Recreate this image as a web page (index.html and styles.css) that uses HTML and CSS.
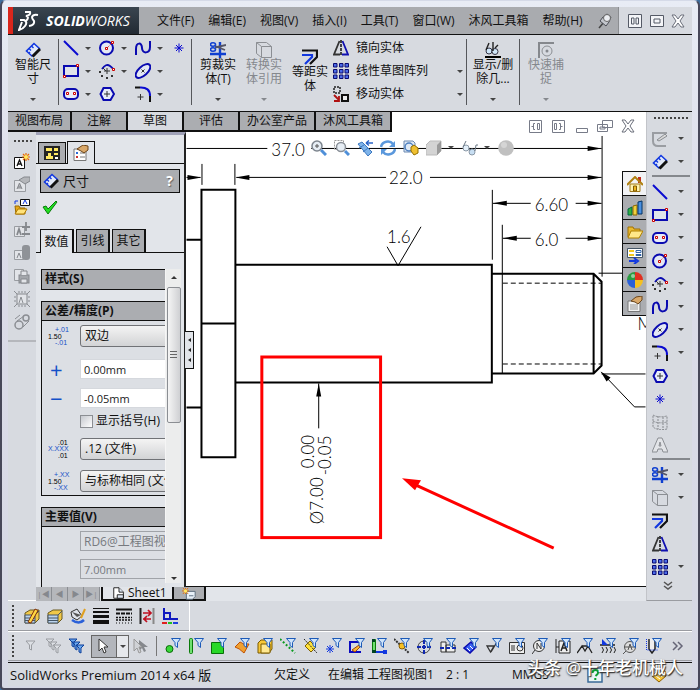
FILE: index.html
```html
<!DOCTYPE html>
<html lang="zh-CN">
<head>
  <meta charset="UTF-8" />
  <title>SolidWorks Premium 2014</title>
  <link rel="stylesheet" href="styles.css">
</head>
<body>
  <!-- 图标库 -->
  <svg class="defs" aria-hidden="true">
    <symbol id="dim" viewBox="0 0 16 16"><path d="M1.500 9L9 1.500L15 7L7.500 14.500Z" fill="#e3eaf8"/><path d="M7.500 14.500L1.500 9L9 1.500L15 7" fill="none" stroke="#1238e0" stroke-width="1.600"/><path d="M4 6.500l2 2M6.500 4l2 2M4 11l1-1" fill="none" stroke="#1238e0" stroke-width="1.400"/><path d="M15 7L7.500 14.500" stroke="#111" stroke-width="3"/></symbol>
    <symbol id="line" viewBox="0 0 16 16"><path d="M1 1L15 15" stroke="#0a0ad0" stroke-width="2"/></symbol>
    <symbol id="rect" viewBox="0 0 16 16"><path d="M1 3H15V13H1Z" fill="#e0e3ea" stroke="#0a0ab0" stroke-width="2"/><path d="M13.500 1.500h2v2h-2zM.5 12.500h2v2h-2z" fill="#fff" stroke="#c00"/></symbol>
    <symbol id="slot" viewBox="0 0 16 16"><rect x="1" y="3" width="14" height="10" rx="4" fill="#e8ecf8" stroke="#0a0ab0" stroke-width="2"/><path d="M3.500 6.500h2v2h-2zM10.500 6.500h2v2h-2z" fill="#fff" stroke="#c00"/></symbol>
    <symbol id="circle" viewBox="0 0 16 16"><circle cx="7.500" cy="8" r="6.500" fill="#e4e8f4" stroke="#0a0ab0" stroke-width="2"/><path d="M8 8L13 3" stroke="#c00" stroke-dasharray="1 1"/><path d="M6.500 7.500h2v2h-2zM12.500 1.500h2v2h-2z" fill="#fff" stroke="#c00"/></symbol>
    <symbol id="arc" viewBox="0 0 16 16"><path d="M3 6Q7 0 11 3T14 7" fill="none" stroke="#0a0ab0" stroke-width="1.800"/><path d="M8 5v6M5 8h6M4 5l3 3" stroke="#333"/><path d="M0 8h2v2H0zM2 12h2v2H2zM7 14h2v2H7zM12 12h2v2h-2z" fill="#333"/><path d="M13.500 5.500h2v2h-2z" fill="#fff" stroke="#c00"/></symbol>
    <symbol id="spline" viewBox="0 0 16 16"><path d="M1 15V9C1 2 7 2 7 8S15 14 15 7V1" fill="none" stroke="#0a0ab0" stroke-width="2"/></symbol>
    <symbol id="ellipse" viewBox="0 0 16 16"><ellipse cx="8" cy="8" rx="9" ry="4.500" transform="rotate(-42 8 8)" fill="#e4e8f4" stroke="#0a0ab0" stroke-width="2"/><path d="M6.500 6.500l3 3M9.500 6.500l-3 3" stroke="#333"/></symbol>
    <symbol id="fillet" viewBox="0 0 16 16"><path d="M0 1.500H5M15 10V16" stroke="#111" stroke-width="2"/><path d="M5 1.500Q15 1 15 10" fill="none" stroke="#0a0ad0" stroke-width="2"/><path d="M5.500 8v6M2.500 11h6" stroke="#333"/></symbol>
    <symbol id="polygon" viewBox="0 0 16 16"><path d="M4.500 2h7L15 8l-3.500 6h-7L1.500 8Z" fill="#e8ecf8" stroke="#0a0ab0" stroke-width="2"/><path d="M8 5v6M5 8h6" stroke="#333"/></symbol>
    <symbol id="star" viewBox="0 0 16 16"><path d="M8 3.500v9M3.500 8h9M5 5l6 6M11 5l-6 6" stroke="#0a0ad0"/></symbol>
    <symbol id="trim" viewBox="0 0 16 16"><path d="M10 0V16M0 12H16" stroke="#1040d0" stroke-width="2.400"/><path d="M5 5.500L16 3M5 4L15 8" stroke="#556" stroke-width="1.800"/><ellipse cx="3" cy="2.500" rx="2.500" ry="1.700" fill="none" stroke="#1040d0" stroke-width="1.600"/><ellipse cx="3" cy="7.500" rx="2.500" ry="1.700" fill="none" stroke="#1040d0" stroke-width="1.600"/></symbol>
    <symbol id="convert" viewBox="0 0 16 16"><path d="M.5 .5h10l5 4v11h-10l-5-4zM5.500 4.500h10M5.500 4.500v11M.5 .5l5 4" fill="none" stroke="#8b8e93"/></symbol>
    <symbol id="offset" viewBox="0 0 16 16"><path d="M0 1.500H15V8L8 15" fill="none" stroke="#111" stroke-width="2.200"/><path d="M0 6H10V8L3 15" fill="none" stroke="#1238e0" stroke-width="2.200"/></symbol>
    <symbol id="mirror" viewBox="0 0 16 16"><path d="M6.500 1L1 14.500H7" fill="none" stroke="#333" stroke-width="1.800"/><path d="M9.500 1L15 14.500H9" fill="none" stroke="#1010b0" stroke-width="1.800"/><path d="M8 0V16" stroke="#111" stroke-width="1.500" stroke-dasharray="3 1"/></symbol>
    <symbol id="pattern" viewBox="0 0 16 16"><path d="M.5 .5h3.500v3.500H.5zM6.500 .5h3.500v3.500H6.500zM12 .5h3.500v3.500H12zM.5 6.500h3.500v3.500H.5zM6.500 6.500h3.500v3.500H6.500zM12 6.500h3.500v3.500H12zM.5 12h3.500v3.500H.5zM6.500 12h3.500v3.500H6.500zM12 12h3.500v3.500H12z" fill="#4a6ae8" stroke="#0a0a70"/></symbol>
    <symbol id="move" viewBox="0 0 16 16"><path d="M1 1h6v6H1z" fill="none" stroke="#222" stroke-width="1.500" stroke-dasharray="2 1"/><path d="M9 9h6v6H9z" fill="#eee" stroke="#111" stroke-width="2"/><path d="M1 9l5 5M6 10v5H1" stroke="#b01010" stroke-width="1.800" fill="none"/></symbol>
    <symbol id="show" viewBox="0 0 16 16"><circle cx="4" cy="9" r="3" fill="#cfe6f8" stroke="#334"/><circle cx="10" cy="9.500" r="3" fill="#cfe6f8" stroke="#334"/><path d="M1 8L4 1M8 9V0M10 6l3-3" stroke="#222" fill="none" stroke-width="1.400"/><path d="M0 15H16" stroke="#000" stroke-width="2"/></symbol>
    <symbol id="snap" viewBox="0 0 16 16"><path d="M1 16V1H16" fill="none" stroke="#85888d" stroke-width="2"/><circle cx="9" cy="9" r="5" fill="none" stroke="#8b8e93"/><circle cx="9" cy="9" r="1.500" fill="#85888d"/></symbol>
    <symbol id="pin" viewBox="0 0 16 16"><path d="M2 15L7 9" stroke="#444" stroke-width="1.500"/><path d="M3 8L9 13L12 9L14 4L10 1L6 4Z" fill="#c3c6cc" stroke="#4a4d55"/><circle cx="10" cy="5" r="3.500" fill="#eceef2" stroke="#666"/></symbol>
    <symbol id="win-tile" viewBox="0 0 16 16"><path d="M1.500 1.500h13v13h-13zM4.500 5h2.500v6H4.500zM9 5h2.500v6H9z" fill="#f4f5f8" stroke="#555a66"/></symbol>
    <symbol id="win-max" viewBox="0 0 16 16"><path d="M1.500 2.500h13v11h-13zM5 6h6v4H5z" fill="#f4f5f8" stroke="#555a66"/></symbol>
    <symbol id="win-close" viewBox="0 0 16 16"><path d="M2 2h3l3 4 3-4h3l-4 6 4 6h-3l-3-4-3 4H2l4-6z" fill="#fff" stroke="#6a6e7a"/></symbol>
    <symbol id="win-prev" viewBox="0 0 16 16"><path d="M1.500 2.500h12v12h-12z" fill="#fff" stroke="#777b88"/><path d="M9.500 5.500h2v6h-2zM7 5.500H5.500v6H7M6 8.500H3.500" fill="none" stroke="#777b88"/></symbol>
    <symbol id="win-next" viewBox="0 0 16 16"><path d="M1.500 2.500h12v12h-12z" fill="#fff" stroke="#777b88"/><path d="M3.500 5.500h2v6h-2zM8 5.500h1.500v6H8M9 8.500h2.500" fill="none" stroke="#777b88"/></symbol>
    <symbol id="win-min" viewBox="0 0 16 16"><path d="M2.500 10.500h11v4h-11z" fill="#fff" stroke="#777b88"/></symbol>
    <symbol id="win-restore" viewBox="0 0 16 16"><path d="M5.500 2.500h10v7h-10zM.5 6.500h10v7H.5zM3 9h5v2H3z" fill="#fff" stroke="#777b88"/></symbol>

    <!-- 注解工具栏 -->
    <symbol id="note-new" viewBox="0 0 16 16"><path d="M.5 4.500h10v11H.5z" fill="#fff" stroke="#111"/><path d="M3 13l2.500-6L8 13M4 11h3" stroke="#111" fill="none" stroke-width="1.300"/><path d="M12 0v8M8 4h8M9 1l6 6M15 1L9 7" stroke="#e86a00" stroke-width="1.200"/><circle cx="12" cy="4" r="2" fill="#ffe860"/></symbol>
    <symbol id="note-gray" viewBox="0 0 16 16"><path d="M.5 4.500h11v11H.5z" fill="#e2e4e8" stroke="#999ca1"/><path d="M3 13l2.500-6L8 13M4 11h3M5 4l5-3h6v4l-5 3z" stroke="#85888d" fill="#b4b6ba"/></symbol>
    <symbol id="note-open" viewBox="0 0 16 16"><path d="M6.500 .5h9v6h-9z" fill="#fff" stroke="#111"/><path d="M9 5l2-4 2 4M1 5V2h3" stroke="#1238e0" fill="none"/><path d="M1 7h4l1 2h5v6H2z" fill="#e8a818" stroke="#9a6a00"/><path d="M4 10h9l-3 5H1z" fill="#ffe27a" stroke="#b07a00"/></symbol>
    <symbol id="note-plus" viewBox="0 0 16 16"><path d="M.5 4.500h10v10H.5z" fill="#e2e4e8" stroke="#999ca1"/><path d="M3 13l2-6 2 6M12 0v9M8 5h8M8 12h8" stroke="#85888d" stroke-width="1.800" fill="none"/></symbol>
    <symbol id="note-stack" viewBox="0 0 16 16"><path d="M.5 5.500h9v9h-9z" fill="#e2e4e8" stroke="#999ca1"/><path d="M3 13l2-5 2 5" stroke="#85888d" fill="none"/><rect x="8" y="0" width="8" height="15" rx="3" fill="#8f9297"/></symbol>
    <symbol id="note-lock" viewBox="0 0 16 16"><path d="M.5 1.500h9v11h-9z" fill="#e2e4e8" stroke="#999ca1"/><rect x="5" y="7" width="10" height="8" fill="#a3a6ab" stroke="#85888d"/><path d="M7 7V3h6v4M7 11h6v4H7z" fill="#e2e4e8" stroke="#85888d"/></symbol>
    <symbol id="note-frame" viewBox="0 0 16 16"><path d="M3 3h10v10H3z" fill="#e2e4e8" stroke="#85888d"/><path d="M5 12l2-6 2 6M0 0l3 3M16 0l-3 3M0 16l3-3M16 16l-3-3M5 0v2M8 0v2M11 0v2M5 14v2M8 14v2M11 14v2M0 6h2M0 10h2M14 6h2M14 10h2" stroke="#8b8e93" fill="none"/></symbol>
    <symbol id="belt" viewBox="0 0 16 16"><circle cx="5" cy="11" r="4" fill="none" stroke="#8b8e93" stroke-width="1.500"/><circle cx="12" cy="4" r="3" fill="none" stroke="#8b8e93" stroke-width="1.500"/><path d="M1 5L6 1M9 13l6-6M3 7l7-5" stroke="#8b8e93"/></symbol>

    <!-- 属性面板 -->
    <symbol id="tree" viewBox="0 0 16 16"><path d="M0 1h16v14H0z" fill="#222"/><path d="M2 3h6v3H2zM10 3h4v3h-4zM4 8h3v3h2v3H2v-3h2zM10 8h4v2h-4z" fill="#ffe860"/><path d="M11 12h3v2h-3z" fill="#fff"/></symbol>
    <symbol id="props" viewBox="0 0 16 16"><path d="M1 4h12v11.500H1z" fill="#fff" stroke="#777"/><path d="M3 7h2v2H3z" fill="#2a6ad8"/><path d="M3 11h2v2H3z" fill="#c33"/><path d="M7 8h5M7 12h5" stroke="#777"/><path d="M4 4L10 0l5 1v4l-4 3-3-2z" fill="#d9a86a" stroke="#6b451a"/></symbol>
    <symbol id="check" viewBox="0 0 16 16"><path d="M1 8l3-1 2 3 8-8 1 1-9 12z" fill="#20e020" stroke="#0a7a0a"/></symbol>

    <!-- 视图工具 -->
    <symbol id="zoom-fit" viewBox="0 0 16 16"><path d="M10 10l5 5" stroke="#4f8fd8" stroke-width="3"/><circle cx="6" cy="6" r="5" fill="#e6edf4" stroke="#7d858e" stroke-width="1.500"/><path d="M4 6h4M6 4v4" stroke="#555"/></symbol>
    <symbol id="zoom-area" viewBox="0 0 16 16"><path d="M.5 .5h9v9h-9z" fill="none" stroke="#999" stroke-dasharray="2 1"/><path d="M11 11l4 4" stroke="#4f8fd8" stroke-width="3"/><circle cx="7" cy="7" r="4.500" fill="#e6edf4" stroke="#8a9098" stroke-width="1.500"/></symbol>
    <symbol id="prev-view" viewBox="0 0 16 16"><path d="M1 4l4-2 10 10-4 4z" fill="#7fb4ea" stroke="#3c78c0"/><path d="M2 8l5-3M6 12l5-4" stroke="#3c78c0"/><path d="M9 3h7M9 3l3-2.500M9 3l3 2.500" stroke="#2d66c8" stroke-width="1.500"/></symbol>
    <symbol id="rotate" viewBox="0 0 16 16"><path d="M1 7C2 1 10 0 13 4M15 9C14 15 6 16 3 12" fill="none" stroke="#5b98dc" stroke-width="2.500"/><path d="M15 1v6H9zM1 15V9h6z" fill="#5b98dc"/></symbol>
    <symbol id="view3d" viewBox="0 0 16 16"><path d="M1 1h9l2 2v9H1z" fill="#dfe9f5" stroke="#6a88b0"/><circle cx="6" cy="7" r="4" fill="none" stroke="#4f80c0" stroke-width="1.500"/><path d="M8 11V7l3-2 4 3v5l-4 2z" fill="#f0c030" stroke="#957000"/></symbol>
    <symbol id="cube" viewBox="0 0 16 16"><path d="M0 5l4-4h11v10l-4 4H0z" fill="#d4d4d4" stroke="#bbb"/><path d="M11 5l4-4v10l-4 4z" fill="#9b9b9b"/></symbol>
    <symbol id="glasses" viewBox="0 0 16 16"><circle cx="4" cy="8" r="3" fill="#e3eff9" stroke="#8a98a6"/><circle cx="10" cy="12" r="3" fill="#c7def2" stroke="#8a98a6"/><path d="M1 7l3-6M7 9l2 1M13 11l1-6h2" stroke="#6a7886" fill="none"/></symbol>
    <symbol id="ball" viewBox="0 0 16 16"><circle cx="8" cy="8" r="7.800" fill="#c0c0c0"/><circle cx="6" cy="5" r="3" fill="#d5d5d5"/></symbol>

    <!-- 任务窗格 -->
    <symbol id="home" viewBox="0 0 16 16"><path d="M11 1h3v6h-3z" fill="#c03020"/><path d="M3 8h10v7.500H3z" fill="#fff3b0" stroke="#a07818"/><path d="M0 9L8 1l8 8" fill="none" stroke="#b08010" stroke-width="2"/><path d="M6.500 10h3v5h-3z" fill="#f0b820" stroke="#805a00"/></symbol>
    <symbol id="library" viewBox="0 0 16 16"><path d="M1 9l4-2v8H1z" fill="#30b040" stroke="#064"/><path d="M6 6l4-1v10H6z" fill="#f0d040" stroke="#860"/><path d="M11 2l4-1v13h-4z" fill="#4a90e0" stroke="#036"/></symbol>
    <symbol id="folder" viewBox="0 0 16 16"><path d="M1 13V3h5l1 2h6v3" fill="#e8b830" stroke="#a07000"/><path d="M4 7h12l-4 7H1z" fill="#ffe88a" stroke="#b08000"/></symbol>
    <symbol id="palette" viewBox="0 0 16 16"><path d="M.5 .5h15v9H.5z" fill="#fff" stroke="#456"/><path d="M2 2h5v2H2zM2 6h5v2H2z" fill="#f0c820"/><path d="M9 2.500h5v2H9zM9 6.500h5v1H9z" fill="#fff" stroke="#36a"/><path d="M2 13h7M7 10l4 3-4 3" stroke="#1238e0" stroke-width="2" fill="none"/></symbol>
    <symbol id="appearance" viewBox="0 0 16 16"><path d="M8 8V0a8 8 0 0 0-8 8z" fill="#2a9a40"/><path d="M8 8V0a8 8 0 0 1 8 8z" fill="#e03020"/><path d="M8 8H0a8 8 0 0 0 8 8z" fill="#2a60d8"/><path d="M8 8h8a8 8 0 0 1-8 8z" fill="#f5c020"/><circle cx="6" cy="4" r="2" fill="#fff" opacity=".5"/></symbol>
    <symbol id="custom" viewBox="0 0 16 16"><path d="M1 5h12v10.500H1z" fill="#f2f2f2" stroke="#777"/><path d="M3 9h8M3 11h8M3 13h8" stroke="#999"/><path d="M4 5L9 1l6-1v4l-4 4-3-2z" fill="#d9a86a" stroke="#6b451a"/></symbol>

    <!-- 图层与选择过滤 -->
    <symbol id="layer" viewBox="0 0 16 16"><path d="M1 5l5-3h9v9l-4 4H1z" fill="#f0c848" stroke="#6b5a20"/><path d="M1 7h10v8H1z" fill="#bcd4ec" stroke="#456"/><path d="M1 10h10M1 12.500h10M11 7l4-4" stroke="#456"/></symbol>
    <symbol id="layer-edit" viewBox="0 0 16 16"><use href="#layer"/><path d="M4 14L11 1l3 1.500L7 15z" fill="#ffd840" stroke="#803010"/></symbol>
    <symbol id="bucket" viewBox="0 0 16 16"><path d="M2 12q7 5 12 0" fill="none" stroke="#2a60d8" stroke-width="2.500"/><path d="M1 4l6-3 5 7-5 4-5-3z" fill="#dfe3ea" stroke="#333"/><path d="M2 4l5 5 4-2z" fill="#555"/><path d="M15 1l-4 9" stroke="#e0a020" stroke-width="2"/></symbol>
    <symbol id="thick" viewBox="0 0 16 16"><path d="M0 .5h16" stroke="#111"/><path d="M0 4h16" stroke="#111" stroke-width="2"/><path d="M0 8.500h16" stroke="#111" stroke-width="3"/><path d="M0 14h16" stroke="#111" stroke-width="4"/></symbol>
    <symbol id="style" viewBox="0 0 16 16"><path d="M0 1.500h16" stroke="#111" stroke-width="2"/><path d="M0 5.500h16" stroke="#111" stroke-width="2" stroke-dasharray="4 1"/><path d="M0 9.500h16M0 12h16" stroke="#111" stroke-width="1.500" stroke-dasharray="2 1"/><path d="M0 15h16" stroke="#111" stroke-dasharray="1 2"/></symbol>
    <symbol id="swap" viewBox="0 0 16 16"><path d="M1.500 0v16" stroke="#222" stroke-width="2"/><path d="M14.500 0v16" stroke="#888" stroke-width="2"/><path d="M4 5h8M9 2l3 3-3 3M12 11H4M8 8l-3 3 3 3" stroke="#c01020" stroke-width="1.700" fill="none"/></symbol>
    <symbol id="color" viewBox="0 0 16 16"><path d="M2 0v11h14M2 5h6v6" fill="none" stroke="#1018c0" stroke-width="2"/><path d="M0 15h5" stroke="#e02020" stroke-width="2"/><path d="M6 15h4" stroke="#20c020" stroke-width="2"/><path d="M11 15h5" stroke="#2040e0" stroke-width="2"/></symbol>
    <symbol id="funnel" viewBox="0 0 16 16"><path d="M6.500 .5h9l-3 4v5l-2.500-2V4.500z" fill="#cfe4fa" stroke="#1c5ab8"/></symbol>
    <symbol id="f-gray" viewBox="0 0 16 16"><path d="M4 3h9L9.500 7v5l-2-1V7z" fill="#dcdfe4" stroke="#9a9da2"/></symbol>
    <symbol id="f-multi" viewBox="0 0 16 16"><path d="M1 1h8L6 4v5L4 8V4zM4 4h8L9 7v5l-2-1V7zM8 7h8l-3 3v5l-2-1v-4z" fill="#dcdfe4" stroke="#9a9da2"/></symbol>
    <symbol id="f-blue" viewBox="0 0 16 16"><path d="M1 1h8L6 4v5L4 8V4zM4 4h8L9 7v5l-2-1V7zM8 7h8l-3 3v5l-2-1v-4z" fill="#6aa8f0" stroke="#0c3f9a"/></symbol>
    <symbol id="cursor" viewBox="0 0 16 16"><path d="M4 1v12l3-3 2 5 2-1-2-5h4z" fill="#fff" stroke="#333"/></symbol>
    <symbol id="cursor-gray" viewBox="0 0 16 16"><path d="M6 2v11l3-3 2 4 2-1-2-4h4z" fill="#85888d"/><path d="M1 1v12l3-3 2 5 2-1-2-5h3z" fill="#d0d2d6" stroke="#999"/></symbol>
    <symbol id="b-vertex" viewBox="0 0 16 16"><circle cx="4.500" cy="11" r="3.500" fill="#38d838" stroke="#0a6a0a"/></symbol>
    <symbol id="b-edge" viewBox="0 0 16 16"><rect x="1.500" y=".5" width="3" height="15" rx="1" fill="#70e070" stroke="#0a7a0a"/></symbol>
    <symbol id="b-face" viewBox="0 0 16 16"><path d="M.5 4.500h12v11H.5z" fill="#28d828" stroke="#087008"/></symbol>
    <symbol id="b-surf" viewBox="0 0 16 16"><path d="M1 9l5-5q3 3 9 2l-5 9Q5 10 1 9z" fill="#f0a030" stroke="#c05000"/></symbol>
    <symbol id="b-body" viewBox="0 0 16 16"><path d="M1 5l3-3h11v9l-3 4H1z" fill="#f8c838" stroke="#7a5a00"/><path d="M4 6h9v9H4z" fill="#ffe890" stroke="#7a5a00"/></symbol>
    <symbol id="b-axis" viewBox="0 0 16 16"><path d="M0 1l15 14" stroke="#0a9a20" stroke-width="2" stroke-dasharray="2 2"/></symbol>
    <symbol id="b-plane" viewBox="0 0 16 16"><path d="M2 8l5-5 6 6-5 5z" fill="#ffe23a" stroke="#806000"/><path d="M1 1l13 14" stroke="#222" stroke-dasharray="2 1"/></symbol>
    <symbol id="b-point" viewBox="0 0 16 16"><path d="M4 7v8M0 11h8M1 8l6 6M7 8l-6 6" stroke="#1238e0"/></symbol>
    <symbol id="b-sketch" viewBox="0 0 16 16"><path d="M10 4H1v10h11" stroke="#0a0ac0" stroke-width="2" fill="none"/><path d="M3 12l7-5 1 2-5 5z" fill="#f8b830" stroke="#a04010"/></symbol>
    <symbol id="b-seg" viewBox="0 0 16 16"><path d="M1.500 1.500h3v12h-3z" fill="#70e070" stroke="#0a7a0a"/><path d="M3 14h12" stroke="#1238e0" stroke-width="2"/><path d="M1 1h3v3H1zM1 12h4v3H1z" fill="#042"/><path d="M12 12h4v4h-4z" fill="#1238e0"/></symbol>
    <symbol id="b-mid" viewBox="0 0 16 16"><path d="M0 1l15 14" stroke="#333" stroke-width="2" stroke-dasharray="2 1"/><circle cx="8" cy="8" r="3" fill="#f8c020" stroke="#8a6000"/></symbol>
    <symbol id="b-center" viewBox="0 0 16 16"><circle cx="7" cy="9" r="6" fill="none" stroke="#444"/><path d="M7 2v14M0 9h14" stroke="#1028b0" stroke-width="2" stroke-dasharray="4 1"/></symbol>
    <symbol id="b-cline" viewBox="0 0 16 16"><path d="M1 4h5v10H1zM6 7h9v7H6z" fill="#eee" stroke="#333"/><path d="M0 10h16" stroke="#1028b0" stroke-width="2" stroke-dasharray="4 2"/></symbol>
    <symbol id="b-dim" viewBox="0 0 16 16"><path d="M1 10l7-6 5 5-6 6z" fill="#3a60f0" stroke="#0a0ab0" stroke-width="1.500"/><path d="M4 10l3 3M7 8l3 3" stroke="#fff"/></symbol>
    <symbol id="b-rough" viewBox="0 0 16 16"><path d="M1 8h7l-3.500 6zM5 14l6-10" fill="none" stroke="#333" stroke-width="1.300"/></symbol>
    <symbol id="b-gtol" viewBox="0 0 16 16"><path d="M.5 4.500h15v11H.5z" fill="#eee" stroke="#333"/><path d="M2 8h4M2 10h4M2 12h4" stroke="#333"/><circle cx="11" cy="10" r="3" fill="none" stroke="#333"/></symbol>
    <symbol id="b-note" viewBox="0 0 16 16"><circle cx="7" cy="8" r="5.500" fill="#eee" stroke="#333"/><path d="M5 11V5l4 6V5M0 16l3-4" stroke="#333" fill="none"/></symbol>
    <symbol id="b-datum" viewBox="0 0 16 16"><path d="M1 1v14M1 9h3M4 3h11v12H4z" fill="#eee" stroke="#222"/><path d="M6 13l3-8 3 8M7 10h4" fill="none" stroke="#222" stroke-width="1.500"/></symbol>
    <symbol id="b-weld" viewBox="0 0 16 16"><path d="M0 15l5-7 3 5 3-5 4 7M5 8h8" fill="none" stroke="#222" stroke-width="1.300"/></symbol>
    <symbol id="b-hatch" viewBox="0 0 16 16"><path d="M0 7h15" stroke="#222" stroke-width="1.500"/><path d="M2 1v6h6z" fill="#1238e0"/><path d="M2 9q3 3 0 6M6 9q3 3 0 6M10 9q3 3 0 6M14 9q3 3 0 6" fill="none" stroke="#222"/></symbol>
    <symbol id="b-target" viewBox="0 0 16 16"><circle cx="7" cy="9" r="5.500" fill="#ddd" stroke="#555"/><path d="M5 12l2-6 2 6M1 9h12M0 16l3-3" fill="none" stroke="#555"/></symbol>
    <symbol id="b-thread" viewBox="0 0 16 16"><path d="M3 1v10l3 4 3-4V1" fill="#eee" stroke="#222" stroke-width="1.500"/><path d="M.5 1v11H12" fill="none" stroke="#1238e0" stroke-dasharray="1 1"/></symbol>
    <symbol id="sketch" viewBox="0 0 16 16"><path d="M15 2H1v8q0 5 5 5h8" fill="none" stroke="#9a9da2" stroke-width="2"/><path d="M5 9l8-6 2 2-8 5z" fill="#d8d8d8" stroke="#8a8d92"/></symbol>
    <symbol id="grid3d" viewBox="0 0 16 16"><path d="M1 1q5 3 14 1v13q-9 2-14-2zM1 7q5 3 14 1M6 2v13M11 3v12" fill="none" stroke="#85888d" stroke-dasharray="2 1"/></symbol>
    <symbol id="text-tool" viewBox="0 0 16 16"><path d="M0 15l6-14h4l6 14h-5l-1-3H6l-1 3zM7 9h2L8 5z" fill="#e2e4e8" stroke="#8b8e93"/></symbol>
    <symbol id="more-down" viewBox="0 0 16 16"><path d="M4 4l4 3 4-3M4 8l4 3 4-3" fill="none" stroke="#555" stroke-width="1.500"/></symbol>
    <symbol id="more-right" viewBox="0 0 16 16"><path d="M4 4l4 4-4 4M9 4l4 4-4 4" fill="none" stroke="#667" stroke-width="1.500"/></symbol>
    <symbol id="help" viewBox="0 0 16 16"><path d="M1 1h14v14H1z" fill="#e8f4f4" stroke="#3a6a98" stroke-width="1.500"/><path d="M5.500 6q0-3 3-3t2.500 3q0 1-2.500 3M8.300 11v2" fill="none" stroke="#08a030" stroke-width="2"/></symbol>
    <symbol id="tag" viewBox="0 0 16 16"><path d="M1 9l7-7 6 2 1 5-7 6z" fill="#f8c838" stroke="#906000"/><path d="M5 9l4 3M7 6l4 4" stroke="#fff"/></symbol>
    <symbol id="sheet" viewBox="0 0 16 16"><path d="M2 2h6l5 5v7H2z" fill="#fff" stroke="#111"/><path d="M8 2v5h5M6 10h7v4H6z" fill="#dfe8f5" stroke="#111"/></symbol>
    <symbol id="sheet-add" viewBox="0 0 16 16"><path d="M5 5h10v6l-3 3H5z" fill="#e8f0f8" stroke="#567"/><path d="M8 10h5" stroke="#567"/><path d="M4 1v7M0 4.500h8M1 1l6 7M7 1L1 8" stroke="#e86a00"/><circle cx="4" cy="4.500" r="2" fill="#ffe860"/></symbol>
  </svg>

  <div class="window">
    <!-- 菜单栏 -->
    <header class="menubar">
      <div class="logo">
        <svg class="logo-mark" viewBox="0 0 22 20"><path d="M7 1h5q1 3-4 4 4 1 0 5M2 9h4q4 2 1 6-2 3-6 4l3-8M20 4q-5-1-6 2 0 2 2 4 1 4-5 5" fill="none" stroke="#fff" stroke-width="2"/></svg>
        <span><b>SOLID</b>WORKS</span>
      </div>
      <nav class="menus">
        <a href="#">文件(F)</a>
        <a href="#">编辑(E)</a>
        <a href="#">视图(V)</a>
        <a href="#">插入(I)</a>
        <a href="#">工具(T)</a>
        <a href="#">窗口(W)</a>
        <a href="#">沐风工具箱</a>
        <a href="#">帮助(H)</a>
        <button class="pin" aria-label="固定"><svg><use href="#pin"/></svg></button>
      </nav>
      <div class="window-buttons">
        <button class="tool" aria-label="平铺"><svg><use href="#win-tile"/></svg></button>
        <button class="tool" aria-label="最大化"><svg><use href="#win-max"/></svg></button>
        <button class="tool" aria-label="关闭"><svg><use href="#win-close"/></svg></button>
      </div>
    </header>

    <!-- 命令管理器 -->
    <section class="ribbon">
      <div class="ribbon-group">
        <button class="big"><svg><use href="#dim"/></svg><span>智能尺<br>寸</span><i class="caret"></i></button>
      </div>
      <div class="ribbon-group sketch-grid">
        <button class="tool drop" aria-label="直线"><svg><use href="#line"/></svg><i class="caret"></i></button>
        <button class="tool drop" aria-label="圆"><svg><use href="#circle"/></svg><i class="caret"></i></button>
        <button class="tool drop" aria-label="样条曲线"><svg><use href="#spline"/></svg><i class="caret"></i></button>
        <button class="tool" aria-label="点"><svg><use href="#star"/></svg></button>
        <button class="tool drop" aria-label="矩形"><svg><use href="#rect"/></svg><i class="caret"></i></button>
        <button class="tool drop" aria-label="圆弧"><svg><use href="#arc"/></svg><i class="caret"></i></button>
        <button class="tool drop" aria-label="椭圆"><svg><use href="#ellipse"/></svg><i class="caret"></i></button>
        <span></span>
        <button class="tool drop" aria-label="槽口"><svg><use href="#slot"/></svg><i class="caret"></i></button>
        <button class="tool" aria-label="多边形"><svg><use href="#polygon"/></svg></button>
        <button class="tool drop" aria-label="圆角"><svg><use href="#fillet"/></svg><i class="caret"></i></button>
      </div>
      <div class="ribbon-group">
        <button class="big"><svg><use href="#trim"/></svg><span>剪裁实<br>体(T)</span><i class="caret"></i></button>
        <button class="big" disabled><svg><use href="#convert"/></svg><span>转换实<br>体引用</span><i class="caret"></i></button>
        <button class="big low"><svg><use href="#offset"/></svg><span>等距实<br>体</span></button>
        <div class="command-list">
          <button><svg><use href="#mirror"/></svg>镜向实体</button>
          <button><svg><use href="#pattern"/></svg>线性草图阵列<i class="caret"></i></button>
          <button><svg><use href="#move"/></svg>移动实体<i class="caret"></i></button>
        </div>
      </div>
      <div class="ribbon-group">
        <button class="big"><svg><use href="#show"/></svg><span>显示/删<br>除几...</span><i class="caret"></i></button>
      </div>
      <div class="ribbon-group">
        <button class="big" disabled><svg><use href="#snap"/></svg><span>快速捕<br>捉</span><i class="caret"></i></button>
      </div>
    </section>

    <div class="workspace">
      <div class="document">
        <div class="command-tabs">
          <button>视图布局</button>
          <button>注解</button>
          <button class="active">草图</button>
          <button>评估</button>
          <button>办公室产品</button>
          <button>沐风工具箱</button>
          <div class="doc-buttons">
            <button class="tool" aria-label="上一窗口"><svg><use href="#win-prev"/></svg></button>
            <button class="tool" aria-label="下一窗口"><svg><use href="#win-next"/></svg></button>
            <button class="tool" aria-label="最小化"><svg><use href="#win-min"/></svg></button>
            <button class="tool" aria-label="还原"><svg><use href="#win-restore"/></svg></button>
            <button class="tool" aria-label="关闭文档"><svg><use href="#win-close"/></svg></button>
          </div>
        </div>

        <div class="doc-body">
          <!-- 注解工具栏 -->
          <aside class="left-tools">
            <div class="left-tools-list">
              <i class="grip"></i>
              <button class="tool" aria-label="新注释"><svg><use href="#note-new"/></svg></button>
              <button class="tool" aria-label="编辑注释"><svg><use href="#note-gray"/></svg></button>
              <button class="tool" aria-label="打开样式"><svg><use href="#note-open"/></svg></button>
              <button class="tool" aria-label="添加样式"><svg><use href="#note-plus"/></svg></button>
              <button class="tool" aria-label="堆叠"><svg><use href="#note-stack"/></svg></button>
              <button class="tool" aria-label="锁定"><svg><use href="#note-lock"/></svg></button>
              <button class="tool" aria-label="边框"><svg><use href="#note-frame"/></svg></button>
              <button class="tool" aria-label="皮带"><svg><use href="#belt"/></svg></button>
            </div>
          </aside>

          <div class="doc-main">
            <div class="doc-view">
              <!-- 属性面板 -->
              <section class="panel">
                <div class="panel-tabs">
                  <button aria-label="设计树"><svg><use href="#tree"/></svg></button>
                  <button class="active" aria-label="属性"><svg><use href="#props"/></svg></button>
                </div>
                <div class="panel-title">
                  <svg><use href="#dim"/></svg>
                  <h1>尺寸</h1>
                  <button aria-label="帮助">?</button>
                </div>
                <button class="ok" aria-label="确定"><svg><use href="#check"/></svg></button>
                <div class="value-tabs">
                  <button class="active">数值</button>
                  <button>引线</button>
                  <button>其它</button>
                </div>
                <div class="panel-scroll">
                  <div class="panel-content">
                    <fieldset class="style-box">
                      <h2>样式(S)</h2>
                    </fieldset>
                    <fieldset class="tolerance-box">
                      <h2>公差/精度(P)</h2>
                      <div class="row first">
                        <svg class="tol" viewBox="0 0 20 20"><text x="0" y="13">1.50</text><text class="blue" x="7" y="6">+.01</text><text class="blue" x="7" y="19">-.01</text></svg>
                        <select aria-label="公差类型"><option>双边</option></select>
                      </div>
                      <label class="row"><span class="sign">+</span><input type="text" value="0.00mm"></label>
                      <label class="row"><span class="sign">−</span><input type="text" value="-0.05mm"></label>
                      <label class="check-row"><input type="checkbox">显示括号(H)</label>
                      <div class="row">
                        <svg class="tol" viewBox="0 0 20 20"><text x="10" y="6">.01</text><text class="blue" x="0" y="12">X.XXX</text><text x="10" y="19">.01</text></svg>
                        <select aria-label="单位精度"><option>.12 (文件)</option></select>
                      </div>
                      <div class="row last">
                        <svg class="tol" viewBox="0 0 20 20"><text x="0" y="13">1.50</text><text class="blue" x="6" y="6">+.XX</text><text class="blue" x="6" y="19">-.XX</text></svg>
                        <select aria-label="公差精度"><option>与标称相同 (文件)</option></select>
                      </div>
                    </fieldset>
                    <fieldset class="value-box">
                      <h2>主要值(V)</h2>
                      <div class="row"><input class="name" type="text" value="RD6@工程图视图1" aria-label="名称" disabled></div>
                      <div class="row"><input type="text" value="7.00mm" aria-label="尺寸值" disabled></div>
                    </fieldset>
                  </div>
                  <div class="scrollbar"><i class="up"></i><i class="thumb"></i><i class="down"></i></div>
                </div>
              </section>

              <!-- 工程图 -->
              <main class="drawing">
                <svg class="sheet" viewBox="186 132 460 455">
                  <g class="thin">
                    <path d="M186 148.500H267M311 148.500H602M236 177.500H386M430 177.500H602M186 177.500H200"/>
                    <path d="M201.500 164V185M234.500 164V185M492.500 190V260M502.500 225V374M602.500 136V277"/>
                    <path d="M493 203.500H531M576 203.500H602M503 238.500H531M566 238.500H602"/>
                    <path d="M599 273.500H646M602 374.500H646M602 373L635 407.500H646"/>
                    <path d="M387 247L398 266L421 227M318.500 384V429"/>
                    <path d="M503 283.500H602M503 364.500H602" stroke-dasharray="5 3"/>
                  </g>
                  <g class="thick">
                    <path d="M201 190H235V458H201ZM201 324H235M186 240H201M186 408H201"/>
                    <path d="M235 265H492V383H235M492 274H594L602 282V366L594 374H492M594 274V374"/>
                  </g>
                  <g class="heads">
                    <path d="M602 148.500L588 146V151ZM602 177.500L588 175V180ZM235 177.500L249 175V180ZM201 177.500L187 175V180Z"/>
                    <path d="M493 203.500L507 201V206ZM602 203.500L588 201V206ZM503 238.500L517 236V241ZM602 238.500L588 236V241Z"/>
                    <path d="M318.500 384L316 397H321ZM601 372L611 378L607 382Z"/>
                  </g>
                  <g class="dims">
                    <text x="271" y="156">37.0</text>
                    <text x="389" y="184">22.0</text>
                    <text x="535" y="211">6.60</text>
                    <text x="535" y="246">6.0</text>
                    <text x="387" y="243">1.6</text>
                    <text x="638" y="330">M</text>
                    <text transform="translate(323 525) rotate(-90)">Ø7.00</text>
                    <text transform="translate(314 469) rotate(-90)">0.00</text>
                    <text transform="translate(331 476) rotate(-90)">-0.05</text>
                  </g>
                  <g class="mark">
                    <rect x="261.500" y="357.500" width="119" height="181"/>
                    <path d="M554 549L416 486"/>
                    <path class="mark-head" d="M402 479L421 481L415 491Z"/>
                  </g>
                </svg>

                <div class="view-tools">
                  <button class="tool" aria-label="整屏显示"><svg><use href="#zoom-fit"/></svg></button>
                  <button class="tool" aria-label="局部放大"><svg><use href="#zoom-area"/></svg></button>
                  <button class="tool" aria-label="上一视图"><svg><use href="#prev-view"/></svg></button>
                  <button class="tool" aria-label="旋转"><svg><use href="#rotate"/></svg></button>
                  <button class="tool" aria-label="三维视图"><svg><use href="#view3d"/></svg></button>
                  <button class="tool drop" aria-label="显示样式"><svg><use href="#cube"/></svg><i class="caret"></i></button>
                  <button class="tool drop" aria-label="隐藏项目"><svg><use href="#glasses"/></svg><i class="caret"></i></button>
                  <button class="tool" aria-label="外观"><svg><use href="#ball"/></svg></button>
                </div>
                <button class="collapse" aria-label="收起面板"><i></i><i></i><i></i></button>
                <div class="task-pane">
                  <button class="active" aria-label="资源"><svg><use href="#home"/></svg></button>
                  <button aria-label="设计库"><svg><use href="#library"/></svg></button>
                  <button aria-label="文件"><svg><use href="#folder"/></svg></button>
                  <button aria-label="视图调色板"><svg><use href="#palette"/></svg></button>
                  <button aria-label="外观"><svg><use href="#appearance"/></svg></button>
                  <button aria-label="自定义属性"><svg><use href="#custom"/></svg></button>
                </div>
              </main>
            </div>

            <!-- 图纸标签 -->
            <div class="sheet-tabs">
              <button class="nav" aria-label="第一张">|◀</button>
              <button class="nav" aria-label="上一张">◀</button>
              <button class="nav" aria-label="下一张">▶</button>
              <button class="nav" aria-label="最后一张">▶|</button>
              <button class="sheet-tab"><svg><use href="#sheet"/></svg>Sheet1</button>
              <button class="sheet-add" aria-label="添加图纸"><svg><use href="#sheet-add"/></svg></button>
            </div>
          </div>
        </div>
      </div>

      <!-- 草图工具栏 -->
      <aside class="right-tools">
        <i class="grip"></i>
        <button class="tool drop" aria-label="草图绘制"><svg><use href="#sketch"/></svg><i class="caret"></i></button>
        <button class="tool drop" aria-label="智能尺寸"><svg><use href="#dim"/></svg><i class="caret"></i></button>
        <hr>
        <button class="tool drop" aria-label="直线"><svg><use href="#line"/></svg><i class="caret"></i></button>
        <button class="tool drop" aria-label="矩形"><svg><use href="#rect"/></svg><i class="caret"></i></button>
        <button class="tool drop" aria-label="槽口"><svg><use href="#slot"/></svg><i class="caret"></i></button>
        <button class="tool drop" aria-label="圆"><svg><use href="#circle"/></svg><i class="caret"></i></button>
        <button class="tool drop" aria-label="圆弧"><svg><use href="#arc"/></svg><i class="caret"></i></button>
        <button class="tool drop" aria-label="样条曲线"><svg><use href="#spline"/></svg><i class="caret"></i></button>
        <button class="tool drop" aria-label="椭圆"><svg><use href="#ellipse"/></svg><i class="caret"></i></button>
        <button class="tool drop" aria-label="圆角"><svg><use href="#fillet"/></svg><i class="caret"></i></button>
        <button class="tool" aria-label="多边形"><svg><use href="#polygon"/></svg></button>
        <button class="tool" aria-label="点"><svg><use href="#star"/></svg></button>
        <button class="tool" aria-label="曲面"><svg><use href="#grid3d"/></svg></button>
        <button class="tool" aria-label="文字"><svg><use href="#text-tool"/></svg></button>
        <hr>
        <button class="tool drop" aria-label="剪裁"><svg><use href="#trim"/></svg><i class="caret"></i></button>
        <button class="tool drop" aria-label="转换"><svg><use href="#convert"/></svg><i class="caret"></i></button>
        <button class="tool" aria-label="等距"><svg><use href="#offset"/></svg></button>
        <button class="tool" aria-label="镜向"><svg><use href="#mirror"/></svg></button>
        <button class="tool drop" aria-label="阵列"><svg><use href="#pattern"/></svg><i class="caret"></i></button>
        <button class="tool more" aria-label="更多"><svg><use href="#more-down"/></svg></button>
      </aside>
    </div>

    <!-- 线型工具栏 -->
    <div class="bar line-bar">
      <div class="line-tools">
        <i class="grip-v"></i>
        <button class="tool" aria-label="图层属性"><svg><use href="#layer-edit"/></svg></button>
        <button class="tool" aria-label="更改图层"><svg><use href="#layer"/></svg></button>
        <button class="tool" aria-label="线色"><svg><use href="#bucket"/></svg></button>
        <button class="tool" aria-label="线粗"><svg><use href="#thick"/></svg></button>
        <button class="tool" aria-label="线型"><svg><use href="#style"/></svg></button>
        <button class="tool" aria-label="隐藏边线"><svg><use href="#swap"/></svg></button>
        <button class="tool" aria-label="颜色显示"><svg><use href="#color"/></svg></button>
      </div>
    </div>

    <!-- 选择过滤器 -->
    <div class="bar filter-bar">
      <i class="grip-v"></i>
      <button class="tool" aria-label="过滤器"><svg><use href="#f-gray"/></svg></button>
      <button class="tool" aria-label="清除过滤器"><svg><use href="#f-multi"/></svg></button>
      <button class="tool" aria-label="所有过滤器"><svg><use href="#f-blue"/></svg></button>
      <div class="select-mode">
        <button class="pressed" aria-label="选择"><svg><use href="#cursor"/></svg></button>
        <button class="mode-drop" aria-label="选择方式"><i class="caret"></i></button>
      </div>
      <button class="tool" aria-label="逆选"><svg><use href="#cursor-gray"/></svg></button>
      <i class="divider"></i>
      <button class="tool" aria-label="顶点"><svg><use href="#b-vertex"/><use href="#funnel"/></svg></button>
      <button class="tool" aria-label="边线"><svg><use href="#b-edge"/><use href="#funnel"/></svg></button>
      <button class="tool" aria-label="面"><svg><use href="#b-face"/><use href="#funnel"/></svg></button>
      <button class="tool" aria-label="曲面实体"><svg><use href="#b-surf"/><use href="#funnel"/></svg></button>
      <button class="tool" aria-label="实体"><svg><use href="#b-body"/><use href="#funnel"/></svg></button>
      <button class="tool" aria-label="基准轴"><svg><use href="#b-axis"/><use href="#funnel"/></svg></button>
      <button class="tool" aria-label="基准面"><svg><use href="#b-plane"/><use href="#funnel"/></svg></button>
      <button class="tool" aria-label="草图点"><svg><use href="#b-point"/><use href="#funnel"/></svg></button>
      <button class="tool" aria-label="草图"><svg><use href="#b-sketch"/><use href="#funnel"/></svg></button>
      <button class="tool" aria-label="草图线段"><svg><use href="#b-seg"/><use href="#funnel"/></svg></button>
      <button class="tool" aria-label="中点"><svg><use href="#b-mid"/><use href="#funnel"/></svg></button>
      <button class="tool" aria-label="中心符号线"><svg><use href="#b-center"/><use href="#funnel"/></svg></button>
      <button class="tool" aria-label="中心线"><svg><use href="#b-cline"/><use href="#funnel"/></svg></button>
      <button class="tool" aria-label="尺寸"><svg><use href="#b-dim"/><use href="#funnel"/></svg></button>
      <button class="tool" aria-label="表面粗糙度"><svg><use href="#b-rough"/><use href="#funnel"/></svg></button>
      <button class="tool" aria-label="形位公差"><svg><use href="#b-gtol"/><use href="#funnel"/></svg></button>
      <button class="tool" aria-label="注释"><svg><use href="#b-note"/><use href="#funnel"/></svg></button>
      <button class="tool" aria-label="基准特征"><svg><use href="#b-datum"/><use href="#funnel"/></svg></button>
      <button class="tool" aria-label="焊接符号"><svg><use href="#b-weld"/><use href="#funnel"/></svg></button>
      <button class="tool" aria-label="焊缝"><svg><use href="#b-hatch"/><use href="#funnel"/></svg></button>
      <button class="tool" aria-label="基准目标"><svg><use href="#b-target"/><use href="#funnel"/></svg></button>
      <button class="tool" aria-label="装饰螺纹线"><svg><use href="#b-thread"/><use href="#funnel"/></svg></button>
      <button class="tool" aria-label="更多"><svg><use href="#more-right"/></svg></button>
    </div>

    <!-- 状态栏 -->
    <footer class="status">
      <span class="product">SolidWorks Premium 2014 x64 版</span>
      <span class="state">欠定义</span>
      <span class="editing">在编辑 工程图视图1</span>
      <span class="scale">2 : 1</span>
      <span class="units">MMGS</span>
      <button class="tool help-button" aria-label="帮助"><svg><use href="#help"/></svg></button>
      <button class="tool tag-button" aria-label="标签"><svg><use href="#tag"/></svg></button>
      <span class="watermark">头条 @十年老机械人</span>
    </footer>
  </div>
</body>
</html>
```
FILE: styles.css
```css
* {
  box-sizing: border-box;
}

body {
  margin: 0;
  background: #3f6f9f;
  font-family: "Open Sans", "Noto Sans CJK SC", sans-serif;
  font-size: 12px;
  line-height: 14px;
  color: #111;
}

.defs {
  position: absolute;
  width: 0;
  height: 0;
}

svg {
  display: block;
  width: 16px;
  height: 16px;
  flex: none;
}

button {
  margin: 0;
  padding: 0;
  border: none;
  background: none;
  font: inherit;
  color: inherit;
}

.window {
  display: flex;
  flex-direction: column;
  height: 100vh;
  min-height: 600px;
  padding: 6px 6px 2px;
  border: 2px solid #474759;
  border-top: 1px solid #d5dae8;
  border-radius: 6px 6px 4px 4px;
  background: linear-gradient(#e8ecf5, #dcdce9 30%, #d6d8e4);
}

.tool {
  display: flex;
  align-items: center;
  width: 23px;
  height: 23px;
}

.caret {
  flex: none;
  width: 0;
  height: 0;
  border: 3px solid transparent;
  border-top-color: #444;
  border-bottom: none;
}

.drop {
  width: 36px;
  gap: 6px;
}

/* 菜单栏 */
.menubar {
  display: flex;
  flex: none;
  height: 28px;
  border-bottom: 1px solid #111;
  background: #a9abaf;
}

.logo {
  display: flex;
  flex: none;
  align-items: center;
  gap: 6px;
  width: 131px;
  padding-left: 5px;
  border-left: 5px solid #d9261c;
  background: linear-gradient(#3a4550, #222a33);
  color: #fff;
  font-style: italic;
  font-size: 14px;
}

.logo-mark {
  width: 22px;
  height: 20px;
}

.menus {
  display: flex;
  flex: 1;
  align-items: center;
  gap: 14px;
  min-width: 0;
  padding-left: 18px;
  white-space: nowrap;
}

.menus a {
  color: #111;
  text-decoration: none;
}

.window-buttons {
  display: flex;
  flex: none;
  align-items: center;
  width: 74px;
  padding-left: 8px;
  border-left: 1px solid #8b8d91;
  background: #d7dae0;
}

/* 命令管理器 */
.ribbon {
  display: flex;
  flex: none;
  height: 77px;
  padding-top: 4px;
  border-bottom: 1px solid #111;
  background: #d7dae0;
}

.ribbon-group {
  display: flex;
  height: 66px;
  padding: 0 3px;
  border-right: 1px solid #55575b;
}

.ribbon-group:last-child {
  border-right: none;
}

.ribbon-group:first-child {
  padding: 0 2px;
}

.big {
  display: flex;
  flex-direction: column;
  align-items: center;
  width: 46px;
  padding-top: 3px;
  white-space: nowrap;
}

.big span {
  height: 40px;
}

.big.low {
  padding-top: 10px;
}

.big:disabled {
  color: #85888d;
}

.big:disabled .caret {
  border-top-color: #85888d;
}

.sketch-grid {
  display: grid;
  grid-template-columns: 36px 36px 36px 20px;
  grid-template-rows: 23px 23px 23px;
  padding: 0 0 0 4px;
}

.sketch-grid .tool {
  height: 18px;
}

.command-list {
  display: flex;
  flex-direction: column;
  gap: 5px;
  width: 130px;
}

.command-list button {
  display: flex;
  align-items: center;
  gap: 7px;
  height: 18px;
}

.command-list .caret {
  margin-left: auto;
}

/* 工作区 */
.workspace {
  display: flex;
  flex: 1;
  min-height: 0;
}

.document {
  display: flex;
  flex: 1;
  flex-direction: column;
  min-width: 0;
  background: #fff;
}

.command-tabs {
  display: flex;
  flex: none;
  height: 20px;
}

.command-tabs > button {
  padding: 0 7px;
  border: 1px solid #111;
  border-width: 0 2px 2px 0;
  background: #abadb1;
  white-space: nowrap;
}

.command-tabs > button:nth-child(2),
.command-tabs > button:nth-child(4) {
  padding: 0 15px;
}

.command-tabs > .active {
  padding: 0 15px;
  background: #d7dae0;
}

.doc-buttons {
  display: flex;
  align-items: center;
  margin-left: auto;
  padding-top: 8px;
  padding-right: 3px;
}

.doc-body,
.doc-view {
  display: flex;
  flex: 1;
  min-height: 0;
}

.left-tools {
  width: 28px;
  background: #d7dae0;
  border-bottom: 1px solid #fff;
}

.left-tools-list {
  display: flex;
  flex-direction: column;
  padding: 8px 0 7px 6px;
  border-bottom: 2px solid #b5b7bc;
}

.grip {
  height: 2px;
  margin: 0 2px 7px 0;
  background: repeating-linear-gradient(90deg, #444 0 2px, transparent 2px 4px);
}

.doc-main {
  display: flex;
  flex: 1;
  flex-direction: column;
  min-width: 0;
}

/* 属性面板 */
.panel {
  display: flex;
  flex: none;
  flex-direction: column;
  width: 150px;
  border-top: 3px solid #a0a2b8;
  border-right: 2px solid #222;
  background: #e2e5ea;
}

.panel-tabs {
  display: flex;
  align-items: flex-end;
  gap: 1px;
  height: 29px;
  padding-left: 2px;
  border-bottom: 1px solid #111;
}

.panel-tabs button {
  display: flex;
  align-items: center;
  justify-content: center;
  width: 28px;
  height: 21px;
  border: 1px solid #111;
  border-bottom: none;
  background: #abadb1;
}

.panel-tabs .active {
  height: 23px;
  margin-bottom: -1px;
  background: #e2e5ea;
}

.panel-title {
  display: flex;
  align-items: center;
  gap: 4px;
  height: 24px;
  margin: 5px 4px 6px 4px;
  padding: 0 6px 0 2px;
  border: 1px solid #111;
  background: #abadb1;
}

.panel-title h1 {
  flex: 1;
  margin: 0;
  font-size: 13px;
  font-weight: 400;
}

.panel-title button {
  color: #fff;
  font-size: 14px;
  font-weight: 700;
  text-shadow: 1px 1px 1px #666;
}

.ok {
  width: 16px;
  margin-left: 6px;
}

.value-tabs {
  display: flex;
  align-items: flex-end;
  gap: 2px;
  height: 38px;
  margin: 0 0 16px;
  padding-left: 4px;
  border-bottom: 1px solid #111;
}

.value-tabs button {
  width: 34px;
  height: 23px;
  border: 1px solid #111;
  border-width: 1px 2px 0 1px;
  background: #abadb1;
}

.value-tabs .active {
  height: 24px;
  margin-bottom: -1px;
  background: #e2e5ea;
}

.panel-scroll {
  display: flex;
  flex: 1;
  min-height: 0;
  padding: 0 3px 0 5px;
}

.panel-content {
  flex: 1;
  min-width: 0;
  overflow: hidden;
}

.panel-content fieldset {
  width: 170px;
  min-width: 0;
  margin: 0 0 11px;
  padding: 0;
  border: 1px solid #111;
  background: #dcdfe4;
}

.panel-content h2 {
  height: 19px;
  margin: 0;
  padding: 2px 3px;
  border-bottom: 1px solid #111;
  background: #abadb1;
  font-size: 12px;
  font-weight: 700;
  line-height: 14px;
}

.style-box h2 {
  border-bottom: none;
}

.row {
  display: flex;
  align-items: center;
  height: 22px;
  margin-bottom: 7px;
  padding-left: 6px;
}

.first {
  margin-top: 4px;
  margin-bottom: 11px;
}

.last {
  margin-top: 10px;
  margin-bottom: 3px;
}

.tol {
  width: 20px;
  height: 20px;
  margin-right: 12px;
  overflow: visible;
  font-family: "Liberation Sans", sans-serif;
  font-size: 7px;
}

.blue {
  fill: #1450c8;
}

.sign {
  width: 32px;
  padding-left: 2px;
  color: #1450c8;
  font-size: 22px;
}

.row select {
  appearance: none;
  width: 110px;
  height: 22px;
  padding: 0 4px;
  border: 1px solid #707276;
  border-radius: 3px;
  background: linear-gradient(#f4f4f4, #d2d3d5);
  color: #111;
  font: inherit;
}

.row input {
  width: 110px;
  height: 20px;
  padding: 0 3px;
  border: 1px solid #d5d8dd;
  background: #fff;
  color: #222;
  font: inherit;
  font-size: 11px;
}

.row .name {
  font-size: 12px;
}

.check-row {
  display: flex;
  align-items: center;
  gap: 3px;
  height: 14px;
  margin: -2px 0 10px 38px;
}

.check-row input {
  appearance: none;
  width: 13px;
  height: 13px;
  margin: 0;
  border: 1px solid #8b8e93;
  background: linear-gradient(135deg, #c6c9cf, #fff);
}

.value-box .row {
  margin: 3px 0 6px;
  padding-left: 38px;
}

.value-box input:disabled {
  border-color: #a0a3a8;
  background: #dcdfe4;
  color: #777a7f;
}

.panel-content .value-box {
  height: 90px;
  margin: 0;
}

.scrollbar {
  display: flex;
  flex-direction: column;
  align-items: center;
  width: 16px;
  margin-bottom: 4px;
  border-left: 1px solid #f5f5f5;
  background: #eceded;
}

.up {
  flex: none;
  margin: 7px 0 8px;
  border: 3px solid transparent;
  border-bottom-color: #333;
  border-top: none;
}

.thumb {
  width: 14px;
  height: 136px;
  border: 1px solid #8b8e93;
  border-radius: 2px;
  background: repeating-linear-gradient(#666 0 1px, transparent 1px 3px) center / 7px 9px no-repeat, linear-gradient(90deg, #f5f5f5, #cfd0d3);
}

.down {
  margin-top: auto;
  margin-bottom: 3px;
  border: 3px solid transparent;
  border-top-color: #333;
  border-bottom: none;
}

/* 工程图 */
.drawing {
  position: relative;
  flex: 1;
  min-width: 0;
  border-bottom: 1px solid #111;
}

.sheet {
  width: 100%;
  height: 100%;
}

.thin {
  fill: none;
  stroke: #000;
  stroke-width: 1;
}

.thick {
  fill: none;
  stroke: #000;
  stroke-width: 2;
}

.dims {
  font-family: Lato, sans-serif;
  font-size: 17px;
  font-weight: 300;
}

.mark {
  fill: none;
  stroke: #f00;
  stroke-width: 3;
}

.mark-head {
  fill: #f00;
  stroke: none;
}

.view-tools {
  position: absolute;
  top: 4px;
  left: 125px;
  display: flex;
}

.collapse {
  position: absolute;
  top: 199px;
  left: -1px;
  display: flex;
  flex-direction: column;
  align-items: center;
  justify-content: space-evenly;
  width: 9px;
  height: 38px;
  border: 1px solid #111;
  border-left: none;
  background: #e2e5ea;
}

.collapse i {
  border: 2px solid transparent;
  border-right: 3px solid #222;
  border-left: none;
}

.task-pane {
  position: absolute;
  top: 39px;
  right: 0;
  width: 24px;
  border: 1px solid #111;
  border-width: 1px 0 0 1px;
}

.task-pane button {
  display: flex;
  align-items: center;
  justify-content: center;
  width: 23px;
  height: 24px;
  border-bottom: 1px solid #111;
  background: #abadb1;
}

.task-pane .active {
  background: #f2f3f5;
}

/* 图纸标签 */
.sheet-tabs {
  display: flex;
  flex: none;
  height: 14px;
  background: #e2e5ea;
}

.nav {
  width: 16px;
  border-right: 1px solid #8b8e93;
  background: #b5b7bb;
  color: #85888d;
  font-size: 8px;
  line-height: 12px;
}

.sheet-tab {
  display: flex;
  align-items: center;
  gap: 1px;
  width: 73px;
  margin-left: 1px;
  padding-left: 8px;
  border: 2px solid #111;
  border-top: none;
  background: #e2e5ea;
  line-height: 12px;
}

.sheet-tab svg,
.sheet-add svg {
  height: 14px;
}

.sheet-add {
  width: 32px;
  padding-left: 7px;
  border: 1px solid #111;
  border-width: 0 2px 2px 0;
  background: #abadb1;
}

/* 草图工具栏 */
.right-tools {
  display: flex;
  flex: none;
  flex-direction: column;
  width: 46px;
  padding: 5px 0 0 5px;
  border-left: 1px solid #c2c4c9;
  border-bottom: 1px solid #9a9ca1;
  background: #d7dae0;
}

.right-tools .grip {
  flex: none;
  margin: 0 2px 8px 2px;
}

.right-tools .drop {
  gap: 10px;
}

.right-tools hr {
  width: 38px;
  height: 2px;
  margin: 2px 0 3px;
  border: none;
  background: #85888d;
}

.right-tools .more {
  height: 16px;
  margin-left: 8px;
}

/* 底部工具栏 */
.bar {
  display: flex;
  flex: none;
  align-items: center;
  background: #d7dae0;
}

.line-bar {
  height: 30px;
  border-bottom: 1px solid #9a9ca1;
}

.line-tools {
  display: flex;
  align-items: center;
  width: 182px;
  height: 30px;
  border-right: 1px solid #fff;
}

.grip-v {
  width: 2px;
  height: 22px;
  margin: 0 10px 0 4px;
  background: repeating-linear-gradient(#444 0 2px, transparent 2px 4px);
}

.filter-bar {
  height: 30px;
  border-top: 1px solid #fff;
  border-bottom: 1px solid #9a9ca1;
}

.filter-bar .grip-v {
  margin-right: 8px;
}

.select-mode {
  display: flex;
  width: 39px;
  height: 23px;
  margin-right: 4px;
  border: 1px solid #666;
}

.pressed {
  width: 25px;
  padding-left: 3px;
  border-right: 1px solid #666;
  background: #b3b6bc;
}

.mode-drop {
  display: flex;
  flex: 1;
  align-items: center;
  justify-content: center;
  background: #e6e8ec;
}

.divider {
  width: 1px;
  height: 20px;
  margin-right: 8px;
  background: #777;
}

/* 状态栏 */
.status {
  position: relative;
  display: flex;
  flex: none;
  align-items: center;
  height: 24px;
  margin-top: 1px;
  padding-left: 2px;
  border-top: 1px solid #111;
  background: #d7dae0;
  white-space: nowrap;
}

.product {
  width: 264px;
  font-size: 13px;
}

.state {
  width: 54px;
}

.editing {
  width: 118px;
}

.scale {
  width: 66px;
}

.units {
  width: 75px;
}

.help-button {
  width: 64px;
}

.watermark {
  position: absolute;
  right: 9px;
  bottom: 8px;
  color: #fff;
  font-size: 17px;
  font-weight: 500;
  line-height: 20px;
  text-shadow: 1px 1px 1px #333, 0 1px 2px #555;
}
```
